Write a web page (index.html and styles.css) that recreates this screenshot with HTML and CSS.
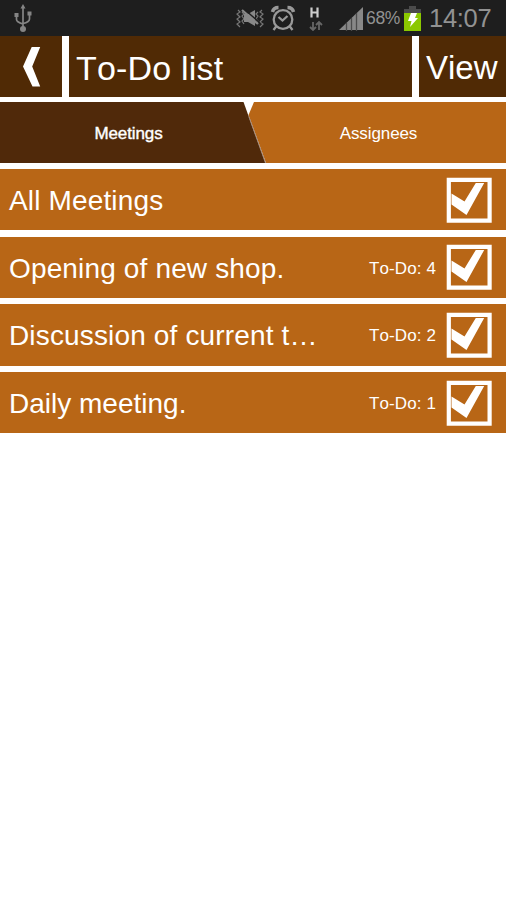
FILE: index.html
```html
<!DOCTYPE html>
<html lang="en">
<head>
<meta charset="utf-8">
<title>To-Do list</title>
<link rel="stylesheet" href="styles.css">
</head>
<body>
<svg class="defs" width="0" height="0" aria-hidden="true">
  <symbol id="checked" viewBox="0 0 46 46">
    <path d="M2.800 2.800h40.800v40.800h-40.800z" fill="none" stroke="#fff" stroke-width="4.200"/>
    <path d="M5.500 16.500 18.500 24.500 29.800 6H38.200L20.500 38 5.500 27.500z" fill="#fff"/>
  </symbol>
</svg>
<div class="status">
  <svg class="usb" width="20" height="30" viewBox="0 0 20 30" fill="none" stroke="#858585" stroke-width="1.700">
    <path d="M10 5v21M3.500 13v3.500q0 2.500 6.500 4.500M16.500 11v5q0 3-6.500 4.500"/>
    <path d="M10 1l2.500 4.500h-5zM1.500 10h4v4h-4zM14.500 8.500h4v4h-4z" fill="#858585" stroke="none"/>
    <circle cx="10" cy="26" r="3" fill="#858585" stroke="none"/>
  </svg>
  <svg class="mute" width="28" height="20" viewBox="0 0 28 20">
    <path d="M2 2l2 2-3 2 3 3-3 2 3 3-3 2 3 3M6 4l2 2-2 2 2 3-2 2 2 3M26 2l-2 2 3 2-3 3 3 2-3 3 3 2-3 3M22 4l-2 2 2 2-2 3 2 2-2 3" fill="none" stroke="#777" stroke-width="1.200"/>
    <path d="M8 6h4l7-4v16l-7-4H8z" fill="#888"/>
    <path d="M8 1l16 14" stroke="#1e1e1e" stroke-width="1.500"/>
    <path d="M6 2l16 14" stroke="#888" stroke-width="2.200"/>
  </svg>
  <svg class="alarm" width="26" height="26" viewBox="0 0 26 26" fill="none" stroke="#999" stroke-width="2.300">
    <circle cx="13" cy="14.500" r="9.300"/>
    <path d="M8.500 12l4 3.500 5-4.500M6.500 21l-3 4M19.500 21l3 4"/>
    <path d="M2.500 7q1-4.500 6-4.500M23.500 7q-1-4.500-6-4.500" stroke-width="3.500"/>
  </svg>
  <svg class="net" width="18" height="26" viewBox="0 0 18 26" fill="none">
    <path d="M4.500 2.500v10M10.500 2.500v10M4.500 7.500h6" stroke="#ccc" stroke-width="2.200"/>
    <path d="M6 17v8M3 22l3 3 3-3M12 25v-8M9 20l3-3 3 3" stroke="#666" stroke-width="1.800"/>
  </svg>
  <svg class="signal" width="25" height="24" viewBox="0 0 25 24">
    <path d="M0 23 24 0v23z" fill="#888"/>
    <path d="M7.500 16v8M12.500 11v13M17.500 6v18" stroke="#4b4b4b" stroke-width="1.300"/>
  </svg>
  <span class="percent">68%</span>
  <svg class="battery" width="17" height="25" viewBox="0 0 17 25">
    <path d="M5 0h7v3h5v5H0V3h5z" fill="#4b4b4b"/>
    <path d="M0 7h17v18H0z" fill="#8bc800"/>
    <path d="M7 7h6l-2 5h3L6 21l1.500-6H4z" fill="#fff"/>
  </svg>
  <span class="clock">14:07</span>
</div>
<header class="bar">
  <div class="back">
    <svg width="18" height="40" viewBox="0 0 18 40"><path d="M8.700 0H17.200L9.200 19.500 17.200 39.500H9.500L0 19.500z" fill="#fff"/></svg>
  </div>
  <h1 class="title">To-Do list</h1>
  <div class="view">View</div>
</header>
<nav class="tabs">
  <svg class="tab-shapes" width="506" height="61" viewBox="0 0 506 61">
    <path d="M254 0H506V61H266L248.500 13z" fill="#b86616"/>
    <path d="M0 0H243.500L265.500 61H0z" fill="#50290a"/>
    <path d="M249 15 265.500 61" stroke="#a28876" stroke-width="1"/>
  </svg>
  <div class="tab active">Meetings</div>
  <div class="tab">Assignees</div>
</nav>
<main class="list">
  <div class="row"><span class="name">All Meetings</span><svg class="check"><use href="#checked"/></svg></div>
  <div class="row"><span class="name">Opening of new shop.</span><span class="count">To-Do: 4</span><svg class="check"><use href="#checked"/></svg></div>
  <div class="row"><span class="name">Discussion of current t…</span><span class="count">To-Do: 2</span><svg class="check"><use href="#checked"/></svg></div>
  <div class="row"><span class="name daily">Daily meeting.</span><span class="count">To-Do: 1</span><svg class="check"><use href="#checked"/></svg></div>
</main>
</body>
</html>
```
FILE: styles.css
```css
* { box-sizing: border-box; }
body {
  margin: 0;
  background: #fff;
  color: #fff;
  font-family: "Liberation Sans", Arial, sans-serif;
  font-kerning: none;
}
.defs { display: block; }
.status {
  display: flex;
  height: 36px;
  align-items: center;
  background: #1e1e1e;
  color: #929292;
}
.status svg { flex: none; }
.usb { margin-left: 13px; }
.mute { margin-left: 203px; }
.alarm { margin-left: 6px; }
.net { margin-left: 11px; }
.signal { margin: 2px 0 0 14px; }
.percent { width: 36px; margin: 1px 0 0 2px; font-size: 17.5px; letter-spacing: -0.3px; }
.battery { margin: 1px 0 0 2px; }
.clock { margin-left: 8px; font-size: 25.5px; line-height: 36px; letter-spacing: -0.3px; }
.bar {
  display: grid;
  grid-template-columns: 62px 343px 87px;
  column-gap: 7px;
  height: 61px;
  font-size: 33px;
  line-height: 64px;
}
.bar > * { background: #502a05; height: 61px; }
.back { display: flex; align-items: center; padding-left: 23px; }
.title { margin: 0; padding-left: 7px; font: inherit; font-size: 34px; letter-spacing: 0.2px; }
.view { padding-left: 7px; }
.tabs {
  position: relative;
  display: grid;
  grid-template-columns: 257px 243px;
  height: 61px;
  margin-top: 5px;
}
.tab-shapes { position: absolute; inset: 0; }
.tab { position: relative; text-align: center; font-size: 17px; line-height: 63px; letter-spacing: -0.1px; }
.active { -webkit-text-stroke: 0.4px #fff; }
.list { display: flex; flex-direction: column; gap: 6.4px; margin-top: 6.2px; }
.row {
  display: flex;
  align-items: center;
  height: 61.2px;
  padding: 0 14px 0 9px;
  background: #b86616;
}
.name { flex: 1; font-size: 28px; line-height: 60px; padding-top: 3px; letter-spacing: 0.15px; white-space: nowrap; }
.daily { letter-spacing: 0; }
.count { margin-right: 10px; padding-top: 3px; font-size: 17px; letter-spacing: 0.1px; }
.check { width: 46px; height: 46px; flex: none; }
```
